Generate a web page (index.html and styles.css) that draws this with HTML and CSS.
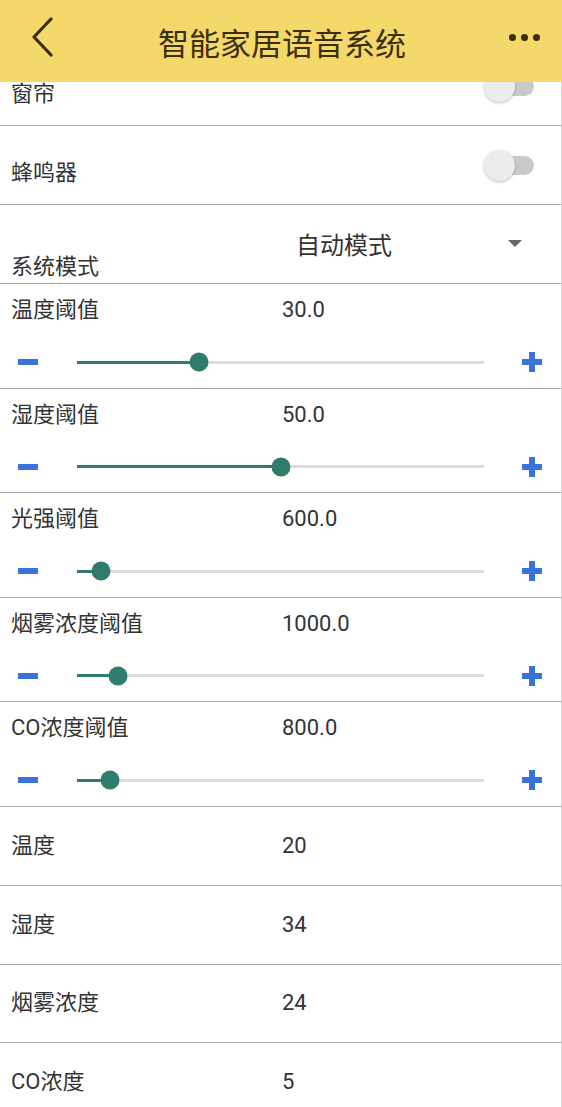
FILE: index.html
```html
<!DOCTYPE html>
<html lang="zh-CN">
<head>
    <meta charset="UTF-8">
    <meta name="viewport" content="width=device-width, initial-scale=1.0">
    <title>智能家居语音系统</title>
    <link rel="stylesheet" href="styles.css">
</head>
<body>
    <header class="topbar">
        <svg class="back" width="24" height="40" viewBox="0 0 24 40">
            <path d="M20 2 L3 20 L20 38" fill="none" stroke="#3a2e0e" stroke-width="3.2" stroke-linecap="round" stroke-linejoin="round"/>
        </svg>
        <h1>智能家居语音系统</h1>
        <div class="more"><span></span><span></span><span></span></div>
    </header>

    <main class="list">
        <div class="row toggle-row">
            <span class="label">窗帘</span>
            <div class="switch"><div class="track"></div><div class="knob"></div></div>
        </div>
        <div class="row toggle-row">
            <span class="label">蜂鸣器</span>
            <div class="switch"><div class="track"></div><div class="knob"></div></div>
        </div>

        <div class="row mode-row">
            <span class="label">系统模式</span>
            <div class="spinner">
                <span>自动模式</span>
                <i class="caret"></i>
            </div>
        </div>

        <div class="row slider-row">
            <div class="line"><span class="label">温度阈值</span><span class="value">30.0</span></div>
            <div class="slider">
                <span class="minus"></span>
                <div class="bar"><div class="fill" style="width: 30%"></div><div class="thumb" style="left: 30%"></div></div>
                <span class="plus"></span>
            </div>
        </div>
        <div class="row slider-row">
            <div class="line"><span class="label">湿度阈值</span><span class="value">50.0</span></div>
            <div class="slider">
                <span class="minus"></span>
                <div class="bar"><div class="fill" style="width: 50%"></div><div class="thumb" style="left: 50%"></div></div>
                <span class="plus"></span>
            </div>
        </div>
        <div class="row slider-row">
            <div class="line"><span class="label">光强阈值</span><span class="value">600.0</span></div>
            <div class="slider">
                <span class="minus"></span>
                <div class="bar"><div class="fill" style="width: 6%"></div><div class="thumb" style="left: 6%"></div></div>
                <span class="plus"></span>
            </div>
        </div>
        <div class="row slider-row">
            <div class="line"><span class="label">烟雾浓度阈值</span><span class="value">1000.0</span></div>
            <div class="slider">
                <span class="minus"></span>
                <div class="bar"><div class="fill" style="width: 10%"></div><div class="thumb" style="left: 10%"></div></div>
                <span class="plus"></span>
            </div>
        </div>
        <div class="row slider-row">
            <div class="line"><span class="label">CO浓度阈值</span><span class="value">800.0</span></div>
            <div class="slider">
                <span class="minus"></span>
                <div class="bar"><div class="fill" style="width: 8%"></div><div class="thumb" style="left: 8%"></div></div>
                <span class="plus"></span>
            </div>
        </div>

        <div class="row value-row"><span class="label">温度</span><span class="value">20</span></div>
        <div class="row value-row"><span class="label">湿度</span><span class="value">34</span></div>
        <div class="row value-row"><span class="label">烟雾浓度</span><span class="value">24</span></div>
        <div class="row value-row"><span class="label">CO浓度</span><span class="value">5</span></div>
    </main>
</body>
</html>
```

FILE: styles.css
```css
body {
    margin: 0;
    padding: 0;
    background-color: #fff;
    color: #333;
    font-family: Roboto, "Noto Sans CJK SC", sans-serif;
    overflow: hidden;
}

.topbar {
    position: fixed;
    top: 0;
    left: 0;
    right: 0;
    height: 82px;
    z-index: 10;
    background-color: #f4d86a;
    display: flex;
    align-items: center;
    padding: 0 22px 0 31px;
    box-sizing: border-box;
}
.topbar .back {
    margin-top: -8px;
}
.topbar h1 {
    flex: 1;
    margin: 0;
    text-align: center;
    font-size: 31px;
    font-weight: normal;
    color: #3a2e0e;
    font-family: "Noto Sans CJK SC", sans-serif;
}
.more {
    display: flex;
    gap: 5px;
    margin-top: -8px;
}
.more span {
    width: 7px;
    height: 7px;
    border-radius: 50%;
    background-color: #3a2e0e;
}

.list {
    padding-top: 47px;
}
.row {
    border-bottom: 1.5px solid #a8a8a8;
    border-right: 1px solid #d6d6d6;
    box-sizing: border-box;
}
.label, .value {
    font-size: 22px;
    line-height: 26px;
    color: #333;
}

/* switches */
.toggle-row {
    height: 79px;
    display: flex;
    align-items: center;
    justify-content: space-between;
    padding: 0 27px 0 11px;
}
.toggle-row .label {
    margin-top: 15px;
}
.switch {
    position: relative;
    width: 50px;
    height: 30px;
}
.switch .track {
    position: absolute;
    right: 0;
    top: 6px;
    width: 42px;
    height: 19px;
    border-radius: 10px;
    background-color: #c9c9c9;
}
.switch .knob {
    position: absolute;
    left: 0;
    top: 0;
    width: 31px;
    height: 31px;
    border-radius: 50%;
    background-color: #ececec;
    box-shadow: 0 1px 3px rgba(0, 0, 0, 0.25);
}

/* mode spinner */
.mode-row {
    height: 79px;
    display: grid;
    grid-template-columns: 285px 1fr;
    padding-left: 11px;
}
.mode-row .label {
    grid-row: 1;
    grid-column: 1;
    align-self: end;
    margin-bottom: 3px;
}
.spinner {
    grid-row: 1;
    grid-column: 2;
    display: flex;
    align-items: center;
    justify-content: space-between;
    padding: 0 39px 0 0;
    margin-top: -2px;
    font-size: 24px;
    color: #333;
}
.caret {
    width: 0;
    height: 0;
    border-left: 7.5px solid transparent;
    border-right: 7.5px solid transparent;
    border-top: 7px solid #666;
}

/* threshold sliders */
.slider-row {
    height: 104.6px;
    padding-top: 13px;
}
.line {
    display: grid;
    grid-template-columns: 271px 1fr;
    padding-left: 11px;
}
.slider {
    display: flex;
    align-items: center;
    height: 20px;
    margin-top: 29px;
    padding: 0 19px 0 18px;
}
.minus {
    width: 20px;
    height: 6px;
    background-color: #3a72da;
}
.bar {
    position: relative;
    flex: 1;
    height: 3px;
    margin: 0 38px 0 39px;
    background-color: #dcdcdc;
}
.fill {
    height: 100%;
    background-color: #2f7c6c;
}
.thumb {
    position: absolute;
    top: 50%;
    width: 19px;
    height: 19px;
    border-radius: 50%;
    background-color: #2f7c6c;
    transform: translate(-50%, -50%);
}
.plus {
    position: relative;
    width: 20px;
    height: 20px;
}
.plus::before, .plus::after {
    content: "";
    position: absolute;
    background-color: #3a72da;
}
.plus::before {
    left: 0;
    top: 7px;
    width: 20px;
    height: 6px;
}
.plus::after {
    left: 7px;
    top: 0;
    width: 6px;
    height: 20px;
}

/* sensor readings */
.value-row {
    height: 78.8px;
    display: grid;
    grid-template-columns: 271px 1fr;
    align-items: center;
    padding-left: 11px;
}
```
